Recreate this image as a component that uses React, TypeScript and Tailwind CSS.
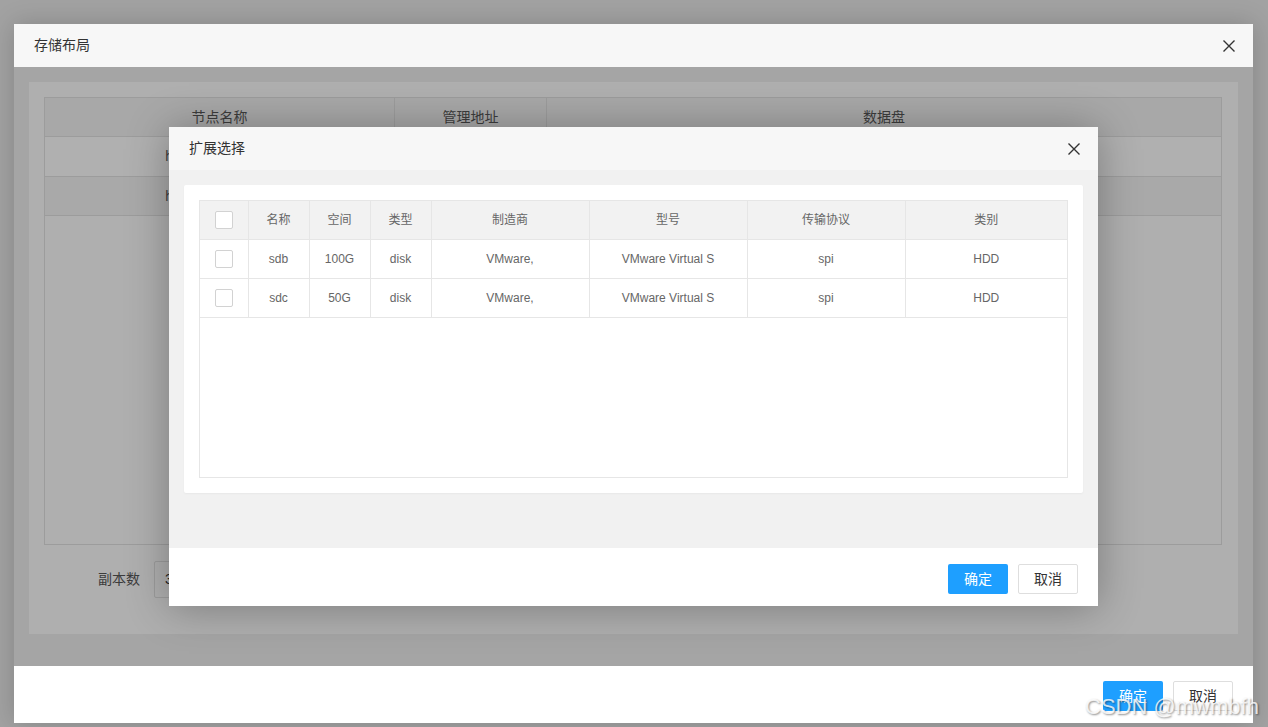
import React from "react";

const disks = [
  { name: "sdb", size: "100G", type: "disk", vendor: "VMware,", model: "VMware Virtual S", tran: "spi", kind: "HDD" },
  { name: "sdc", size: "50G", type: "disk", vendor: "VMware,", model: "VMware Virtual S", tran: "spi", kind: "HDD" },
];

const columns = ["名称", "空间", "类型", "制造商", "型号", "传输协议", "类别"];

function CloseIcon() {
  return (
    <svg width="14" height="14" viewBox="0 0 14 14" className="text-[#333]">
      <path d="M1.5 1.5 L12.5 12.5 M12.5 1.5 L1.5 12.5" stroke="currentColor" strokeWidth="1.4" fill="none" />
    </svg>
  );
}

function Checkbox() {
  return <span className="inline-block h-[18px] w-[18px] rounded-[2px] border border-[#d2d2d2] bg-white align-middle" />;
}

function DialogButtons() {
  return (
    <>
      <button className="h-[30px] w-[60px] rounded-[2px] bg-[#1e9fff] text-[14px] text-white">确定</button>
      <button className="h-[30px] w-[60px] rounded-[2px] border border-[#dedede] bg-white text-[14px] text-[#333]">取消</button>
    </>
  );
}

export default function App() {
  return (
    <div className="relative h-[727px] w-full overflow-hidden bg-[#a2a2a2] pl-[14px] pt-[24px] font-['Liberation_Sans','Noto_Sans_CJK_SC',sans-serif]">
      {/* Outer dialog */}
      <div className="flex h-[699px] w-[1239px] flex-col shadow-[0_0_24px_rgba(0,0,0,0.18)]">
        <div className="flex h-[43px] items-center justify-between bg-[#f7f7f7] pl-[20px] pr-[17px]">
          <span className="text-[14px] text-[#333]">存储布局</span>
          <CloseIcon />
        </div>

        <div className="flex-1 bg-[#a5a5a5] p-[15px] pb-[32px]">
          <div className="flex h-full flex-col bg-[#afafaf] pl-[15px] pr-[16px] pt-[15px]">
            <div className="h-[448px] border border-[#9c9c9c] text-[14px] text-[#3c3c3c]">
              <div className="grid h-[39px] grid-cols-[350px_152px_1fr] border-b border-[#9c9c9c] bg-[#a8a8a8]">
                <div className="flex items-center justify-center border-r border-[#9c9c9c]">节点名称</div>
                <div className="flex items-center justify-center border-r border-[#9c9c9c]">管理地址</div>
                <div className="flex items-center justify-center">数据盘</div>
              </div>
              <div className="grid h-[40px] grid-cols-[350px_152px_1fr] border-b border-[#9c9c9c] bg-[#b0b0b0]">
                <div className="flex items-center justify-center">hadoop-master01</div>
                <div />
                <div />
              </div>
              <div className="grid h-[39px] grid-cols-[350px_152px_1fr] border-b border-[#9c9c9c] bg-[#a9a9a9]">
                <div className="flex items-center justify-center">hadoop-master02</div>
                <div />
                <div />
              </div>
            </div>

            <div className="mt-[16px] flex items-center">
              <span className="w-[96px] text-right text-[14px] text-[#3c3c3c]">副本数</span>
              <div className="ml-[14px] flex h-[37px] w-[220px] items-center rounded-[2px] border border-[#9c9c9c] px-[10px] text-[14px] text-[#222]">
                3
              </div>
            </div>
          </div>
        </div>

        <div className="flex h-[57px] justify-end gap-[10px] bg-white pr-[20px] pt-[15px]">
          <DialogButtons />
        </div>
      </div>

      {/* Inner dialog */}
      <div className="absolute left-[169px] top-[127px] flex h-[479px] w-[929px] flex-col shadow-[0_2px_40px_rgba(0,0,0,0.3)]">
        <div className="flex h-[43px] items-center justify-between bg-[#f7f7f7] pl-[20px] pr-[17px]">
          <span className="text-[14px] text-[#333]">扩展选择</span>
          <CloseIcon />
        </div>

        <div className="h-[378px] bg-[#f1f1f1] px-[15px] pt-[15px]">
          <div className="h-[308px] rounded-[2px] bg-white p-[15px] shadow-[0_1px_2px_rgba(0,0,0,0.04)]">
            <div className="h-[278px] border border-[#e6e6e6]">
              <table className="w-full table-fixed border-collapse text-[12px] text-[#666]">
                <colgroup>
                  <col className="w-[48px]" />
                  <col className="w-[61px]" />
                  <col className="w-[61px]" />
                  <col className="w-[61px]" />
                  <col className="w-[158px]" />
                  <col className="w-[158px]" />
                  <col className="w-[158px]" />
                  <col />
                </colgroup>
                <thead>
                  <tr className="h-[38px] bg-[#f2f2f2]">
                    <th className="border-b border-r border-[#e6e6e6] p-0 font-normal">
                      <Checkbox />
                    </th>
                    {columns.map((c, i) => (
                      <th
                        key={c}
                        className={
                          i === columns.length - 1
                            ? "border-b border-[#e6e6e6] font-normal"
                            : "border-b border-r border-[#e6e6e6] font-normal"
                        }
                      >
                        {c}
                      </th>
                    ))}
                  </tr>
                </thead>
                <tbody>
                  {disks.map((d) => (
                    <tr key={d.name} className="h-[39px] text-center">
                      <td className="border-b border-r border-[#e6e6e6] p-0">
                        <Checkbox />
                      </td>
                      <td className="border-b border-r border-[#e6e6e6]">{d.name}</td>
                      <td className="border-b border-r border-[#e6e6e6]">{d.size}</td>
                      <td className="border-b border-r border-[#e6e6e6]">{d.type}</td>
                      <td className="border-b border-r border-[#e6e6e6]">{d.vendor}</td>
                      <td className="border-b border-r border-[#e6e6e6]">{d.model}</td>
                      <td className="border-b border-r border-[#e6e6e6]">{d.tran}</td>
                      <td className="border-b border-[#e6e6e6]">{d.kind}</td>
                    </tr>
                  ))}
                </tbody>
              </table>
            </div>
          </div>
        </div>

        <div className="flex h-[58px] justify-end gap-[10px] bg-white pr-[20px] pt-[16px]">
          <DialogButtons />
        </div>
      </div>

      {/* Watermark */}
      <div className="absolute left-[1085px] top-[690px] whitespace-nowrap text-[22px] text-white/80 [text-shadow:1px_1px_2px_rgba(0,0,0,0.45)]">
        CSDN @mwmbfh
      </div>
    </div>
  );
}
